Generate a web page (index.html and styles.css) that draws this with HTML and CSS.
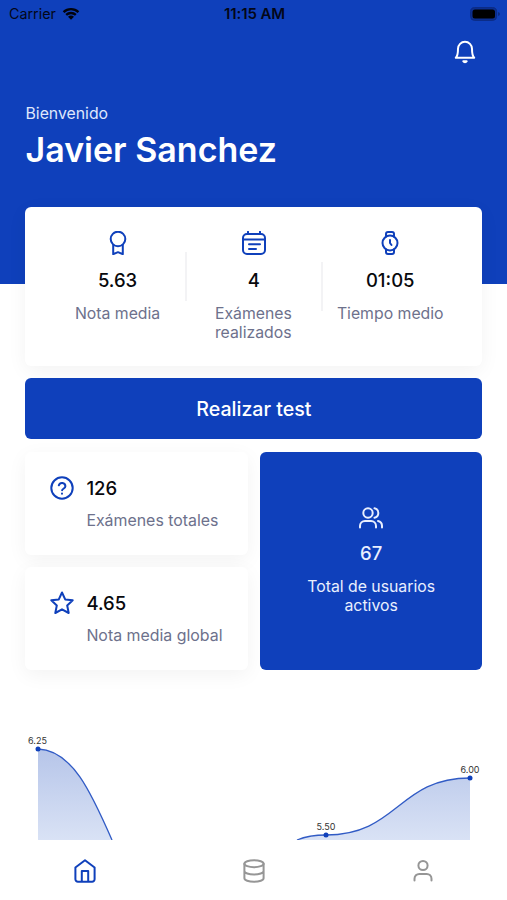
FILE: index.html
```html
<!DOCTYPE html>
<html lang="es">
<head>
<meta charset="utf-8">
<meta name="viewport" content="width=device-width, initial-scale=1">
<title>Inicio</title>
<link rel="stylesheet" href="styles.css">
</head>
<body>
<div class="app">
  <header class="hero">
    <div class="status">
      <div class="carrier"><span>Carrier</span>
        <svg width="18" height="14" viewBox="0 0 20 16"><path d="M1.500 5.800a12.300 12.300 0 0 1 17 0M4.500 9a8 8 0 0 1 11 0" fill="none" stroke="#02030c" stroke-width="2.700"/><path d="M6.600 11.200a5 5 0 0 1 6.800 0L10 14.600z" fill="#02030c"/></svg>
      </div>
      <strong class="time">11:15 AM</strong>
      <div class="battery">
        <svg width="30" height="14" viewBox="0 0 30 14"><rect x=".6" y=".6" width="26" height="12.800" rx="4" fill="#0c2f91" stroke="#0c2b83"/><rect x="2.500" y="2.500" width="22.500" height="9" rx="2.500" fill="#000"/><path d="M28 5v4q2-.6 2-2t-2-2" fill="#0c2b83"/></svg>
      </div>
    </div>
    <button class="bell" aria-label="Notificaciones">
      <svg class="icon" viewBox="0 0 24 24"><path d="M2.800 17.800h18.400c-1.500-1.400-2.200-3.600-2.200-9a7 7 0 0 0-14 0c0 5.400-.7 7.600-2.200 9zM10.300 21.300c.7 1.200 2.700 1.200 3.400 0z"/></svg>
    </button>
    <p class="welcome">Bienvenido</p>
    <h1>Javier Sanchez</h1>
  </header>
  <main>
    <section class="card summary">
      <div class="stat">
        <svg class="icon" viewBox="0 0 24 24"><circle cx="12" cy="8" r="7.300"/><path d="M7.200 14v9.200l4.800-2 4.800 2V14"/></svg>
        <b>5.63</b><p>Nota media</p>
      </div>
      <div class="stat">
        <svg class="icon" viewBox="0 0 24 24"><rect x="1" y="3" width="22" height="20" rx="4"/><path d="M6 .8V3M18 .8V3M1 8.500h22M7 13.200h11M7 18h7"/></svg>
        <b>4</b><p class="wrapped">Exámenes realizados</p>
      </div>
      <div class="stat">
        <svg class="icon" viewBox="0 0 24 24"><circle cx="12" cy="12" r="7.500"/><path d="M8 5.500V3a2 2 0 0 1 2-2h4a2 2 0 0 1 2 2v2.500M8 18.500V21a2 2 0 0 0 2 2h4a2 2 0 0 0 2-2v-2.500M12 9v3l1.500 2"/></svg>
        <b>01:05</b><p>Tiempo medio</p>
      </div>
    </section>
    <button class="action">Realizar test</button>
    <section class="totals">
      <div class="card total">
        <svg class="icon" viewBox="0 0 24 24"><circle cx="12" cy="12" r="10.700"/><path d="M8.800 9.300a3.400 3.400 0 0 1 6.600 1c0 2.300-3.300 2.500-3.300 4M12 17.600v.2"/></svg>
        <div><b>126</b><p>Exámenes totales</p></div>
      </div>
      <div class="card total">
        <svg class="icon" viewBox="0 0 24 24"><path d="m12 1.500 3.200 6.900 7.500.9-5.500 5.200 1.500 7.500L12 18.300 5.300 22l1.500-7.500L1.300 9.300l7.500-.9z"/></svg>
        <div><b>4.65</b><p>Nota media global</p></div>
      </div>
      <div class="users">
        <svg class="icon" viewBox="0 0 24 24"><circle cx="9" cy="7" r="4.700"/><path d="M1 21.500V20a5 5 0 0 1 5-5h6a5 5 0 0 1 5 5v1.500M15.500 2.300a4.800 4.800 0 0 1 0 9.400M19 15a5 5 0 0 1 4 4.800v1.700"/></svg>
        <b>67</b><p>Total de usuarios activos</p>
      </div>
    </section>
    <svg class="chart" viewBox="0 0 507 110" role="img" aria-label="Evolución de la nota media">
      <defs><linearGradient id="area" gradientUnits="userSpaceOnUse" x1="0" y1="19" x2="0" y2="110"><stop stop-color="#b6c5e9"/><stop offset="1" stop-color="#d9e2f5"/></linearGradient></defs>
      <path d="M38 19C72 20 91 62 112 110H38zM297 110Q309 105 326 105C398 105 398 48 470 48V110z" fill="url(#area)"/>
      <path d="M38 19C72 20 91 62 112 110M297 110Q309 105 326 105C398 105 398 48 470 48" class="line"/>
      <g fill="#0f40bb"><circle cx="38" cy="19" r="2.500"/><circle cx="326" cy="105" r="2.500"/><circle cx="470" cy="48" r="2.500"/></g>
      <g class="labels"><text x="37.500" y="14">6.25</text><text x="326" y="99.500">5.50</text><text x="470" y="42.500">6.00</text></g>
    </svg>
  </main>
  <nav>
    <a class="active"><svg class="icon" viewBox="0 0 24 24"><path d="M2.400 8.500 12 1.300l9.600 7.200v11.700a2.500 2.500 0 0 1-2.500 2.500H4.900a2.500 2.500 0 0 1-2.500-2.500zM8.800 22.700V12h6.400v10.700"/></svg></a>
    <a><svg class="icon" viewBox="0 0 24 24"><ellipse cx="12" cy="4.700" rx="9.600" ry="3.500"/><path d="M2.400 4.700v14.500c0 2 4.300 3.500 9.600 3.500s9.600-1.500 9.600-3.500V4.700M2.400 12c0 2 4.300 3.500 9.600 3.500s9.600-1.500 9.600-3.500"/></svg></a>
    <a><svg class="icon" viewBox="0 0 24 24"><circle cx="12" cy="6.500" r="4.600"/><path d="M3.500 21.500v-1.800a4.800 4.800 0 0 1 4.800-4.800h7.400a4.800 4.800 0 0 1 4.800 4.800v1.800"/></svg></a>
  </nav>
</div>
</body>
</html>
```
FILE: styles.css
```css
* { box-sizing: border-box; }
body { margin: 0; background: #fff; font-family: Inter, sans-serif; color: #08090d; }
p, h1 { margin: 0; }
button { border: 0; padding: 0; font: inherit; color: #fff; background: none; }
.app { height: 900px; overflow: hidden; display: flex; flex-direction: column; }
.icon { display: block; width: 24px; height: 24px; fill: none; stroke: currentColor; stroke-width: 2; stroke-linecap: round; stroke-linejoin: round; flex: none; }
.hero { height: 284px; flex: none; background: #0f40bb; color: #fff; display: flex; flex-direction: column; }
.status { height: 27px; padding: 0 7px 0 9px; display: grid; grid-template-columns: 1fr auto 1fr; align-items: center; color: #030718; font-size: 14.3px; }
.carrier { display: flex; align-items: center; gap: 6px; }
.carrier svg, .battery svg { display: block; }
.time { font-size: 15px; letter-spacing: -.1px; font-weight: 600; }
.battery { justify-self: end; }
.bell { align-self: flex-end; margin: 13px 30px 0 0; }
.welcome { margin: 40px 0 0 25.5px; font-size: 15.8px; line-height: 20px; color: #dfe7fc; }
h1 { margin: 5px 0 0 25.5px; font-size: 34px; line-height: 42px; font-weight: 600; }
main { margin-top: -76.6px; height: 633px; flex: none; padding: 0 24.6px 0 25.4px; }
.card { background: #fff; border-radius: 6px; box-shadow: 0 5px 20px rgb(0 0 0 / 5%); }
b { font-size: 18.5px; line-height: 24px; font-weight: 500; }
.summary { height: 159px; padding: 24px 24px 0; display: grid; grid-template-columns: repeat(3, 1fr); }
.stat { display: flex; flex-direction: column; align-items: center; position: relative; color: #08090d; }
.stat .icon, .total .icon { color: #0f40bb; }
.stat b { margin-top: 13px; }
.stat p, .total p { color: #6d718c; }
.stat p { margin-top: 12px; font-size: 15.8px; line-height: 19px; white-space: nowrap; }
.stat .wrapped { width: 78px; white-space: normal; }
.stat + .stat::before { content: ""; position: absolute; left: -1px; top: 21px; width: 2px; height: 49px; background: #f3f3f5; }
.stat:last-child::before { top: 31px; }
.action { display: block; width: 100%; height: 61px; margin: 12px 0; border-radius: 6px; background: #0f40bb; font-size: 19.6px; font-weight: 500; }
.totals { margin-top: 12.2px; display: grid; grid-template: 103px 103px / 1fr 1fr; gap: 12px; }
.total { display: flex; gap: 12.5px; padding: 24.5px 0 0 24.5px; white-space: nowrap; }
.total b { display: block; margin-top: -.3px; }
.total p { margin-top: 11.6px; font-size: 15.9px; line-height: 19px; }
.users { grid-column: 2; grid-row: 1 / 3; border-radius: 6px; background: #0f40bb; color: #e9effe; display: flex; flex-direction: column; align-items: center; justify-content: center; text-align: center; }
.users b { margin-top: 11.5px; }
.users p { width: 150px; margin-top: 12.2px; font-size: 15.8px; line-height: 19px; }
.chart { display: block; width: 507px; height: 110px; margin: 60px -24.6px 0 -25.4px; }
.line { fill: none; stroke: #315bc5; stroke-width: 1.3; }
.labels { font-size: 9px; text-anchor: middle; fill: #333; }
nav { height: 60px; display: grid; grid-template-columns: repeat(3, 1fr); justify-items: center; padding-top: 18.5px; color: #969696; background: #fff; }
.active { color: #0f40bb; }
```
